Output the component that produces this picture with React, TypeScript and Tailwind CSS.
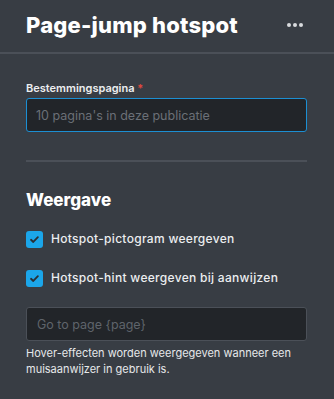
import { useState } from "react";

const font = { fontFamily: "Inter, 'Open Sans', sans-serif" };

const Check = ({ checked, onClick }: { checked: boolean; onClick: () => void }) => (
    <button
        onClick={onClick}
        className={`w-[17px] h-[17px] rounded-[3px] flex items-center justify-center shrink-0 ${checked ? "bg-[#1ba6ea]" : "bg-[#222529] border border-[#5a6068]"}`}>
        {checked && (
            <svg width="11" height="11" viewBox="0 0 12 12" fill="none">
                <path d="M2.2 6.3l2.5 2.4 5-5.2" stroke="#2a2f35" strokeWidth="2" strokeLinecap="round" strokeLinejoin="round" />
            </svg>
        )}
    </button>
);

export default function App() {
    const [showIcon, setShowIcon] = useState(true);
    const [showHint, setShowHint] = useState(true);

    return (
        <div className="w-[334px] h-[399px] bg-[#383d44] text-white overflow-hidden" style={font}>
            {/* HEADER */}
            <div className="h-[54px] px-[26px] flex items-center justify-between border-b-2 border-[#4b5058]">
                <h1 className="text-[22px] font-extrabold tracking-[0.2px] pb-[1px]">Page-jump hotspot</h1>
                <div className="flex gap-[2px] mr-[5px] mb-[2px]">
                    <span className="w-[4px] h-[4px] rounded-full bg-[#d9dbde]"></span>
                    <span className="w-[4px] h-[4px] rounded-full bg-[#d9dbde]"></span>
                    <span className="w-[4px] h-[4px] rounded-full bg-[#d9dbde]"></span>
                </div>
            </div>

            <div className="px-[26px] pr-[27px]">
                {/* DESTINATION */}
                <label className="block mt-[26px] text-[11px] leading-[16px] font-semibold text-[#eceef0]">
                    Bestemmingspagina <span className="text-[#e0483e]">*</span>
                </label>
                <input
                    className="mt-[2px] w-full h-[34px] rounded-[3px] bg-[#222529] border border-[#1c8fd3] px-[9px] text-[12.5px] text-white placeholder-[#6b7077] outline-none"
                    placeholder="10 pagina's in deze publicatie"
                />

                <div className="mt-[28px] h-[2px] bg-[#4b5058]"></div>

                {/* DISPLAY */}
                <h2 className="mt-[26px] text-[17px] leading-[24px] font-extrabold">Weergave</h2>

                <div className="mt-[18px] h-[18px] flex items-center gap-[8px]">
                    <Check checked={showIcon} onClick={() => setShowIcon(!showIcon)} />
                    <span className="text-[12px] tracking-[0.3px] font-medium text-[#eceef0]">Hotspot-pictogram weergeven</span>
                </div>
                <div className="mt-[21px] h-[18px] flex items-center gap-[8px]">
                    <Check checked={showHint} onClick={() => setShowHint(!showHint)} />
                    <span className="text-[12px] tracking-[0.3px] font-medium text-[#eceef0]">Hotspot-hint weergeven bij aanwijzen</span>
                </div>

                <input
                    className="mt-[20px] w-full h-[34px] rounded-[3px] bg-[#222529] border border-[#4b5058] px-[10px] text-[12.5px] text-white placeholder-[#5f646b] outline-none"
                    placeholder="Go to page {page}"
                />
                <p className="mt-[4px] text-[11px] leading-[16px] text-[#e6e8ea]">
                    Hover-effecten worden weergegeven wanneer een muisaanwijzer in gebruik is.
                </p>
            </div>
        </div>
    );
}
